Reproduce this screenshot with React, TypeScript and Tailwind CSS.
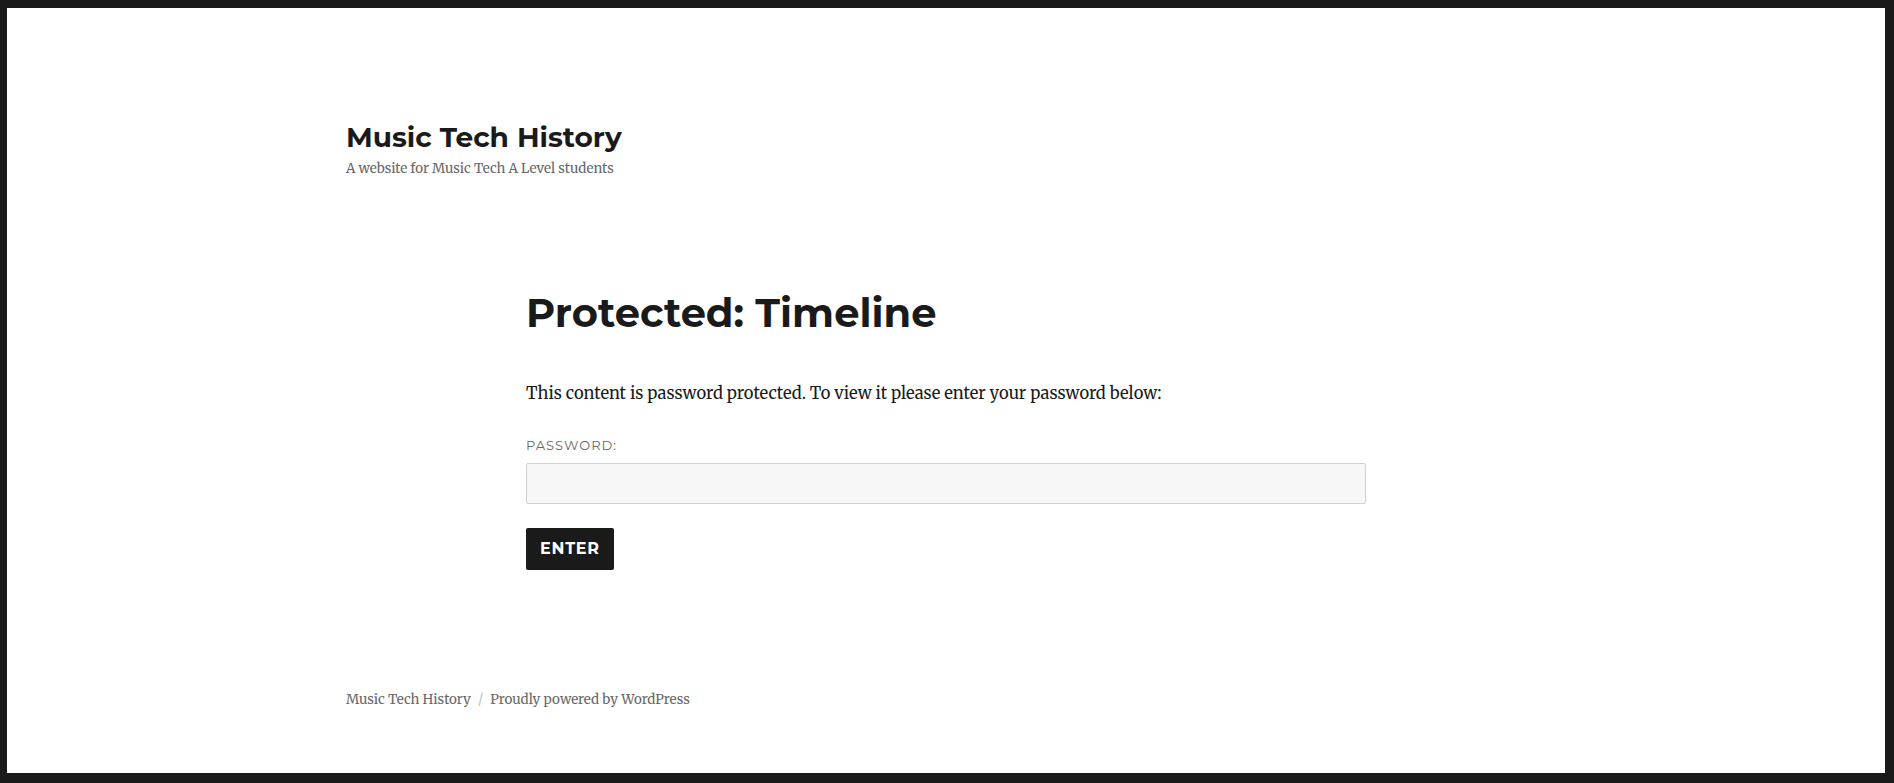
export default function App() {
  const sans = "font-['Montserrat','Inter',sans-serif]";
  const serif = "font-['Merriweather','DejaVu_Serif',serif]";
  return (
    <div className="h-[783px] bg-[#1a1a1a] pt-[8px] pl-[7px] pr-[9px] pb-[10px]">
      <div className="h-full bg-white">
        <div className="mx-auto max-w-[1320px] px-[60px]">
          <header className="pt-[112px]">
            <p className={`${sans} text-[28px] font-bold leading-[35px] text-[#1a1a1a]`}>Music Tech History</p>
            <p className={`${serif} mt-[4px] text-[13.35px] leading-[20px] text-[#686868]`}>
              A website for Music Tech A Level students
            </p>
          </header>

          <main className="ml-[180px] w-[840px] pt-[109px]">
            <h1 className={`${sans} text-[40px] font-bold leading-[49px] text-[#1a1a1a]`}>Protected: Timeline</h1>
            <p className={`${serif} mt-[43px] text-[16.5px] leading-[27px] text-[#1a1a1a]`}>
              This content is password protected. To view it please enter your password below:
            </p>
            <label className={`${sans} mt-[29px] block text-[13px] uppercase tracking-[0.077em] leading-[19px] text-[#686868]`}>
              Password:
            </label>
            <input
              type="password"
              className="mt-[8px] block h-[41px] w-full rounded-[2px] border border-[#d1d1d1] bg-[#f7f7f7]"
            />
            <button className={`${sans} mt-[24px] rounded-[2px] bg-[#1a1a1a] px-[14px] pt-[13px] pb-[13px] text-[16px] font-bold uppercase leading-[16px] tracking-[0.047em] text-white`}>
              Enter
            </button>
          </main>

          <footer className={`${serif} flex items-center gap-[7px] pt-[120px] text-[13.4px] leading-[20px] text-[#686868]`}>
            <span>Music Tech History</span>
            <span className="text-[#c1c1c1]">/</span>
            <span>Proudly powered by WordPress</span>
          </footer>
        </div>
      </div>
    </div>
  );
}
